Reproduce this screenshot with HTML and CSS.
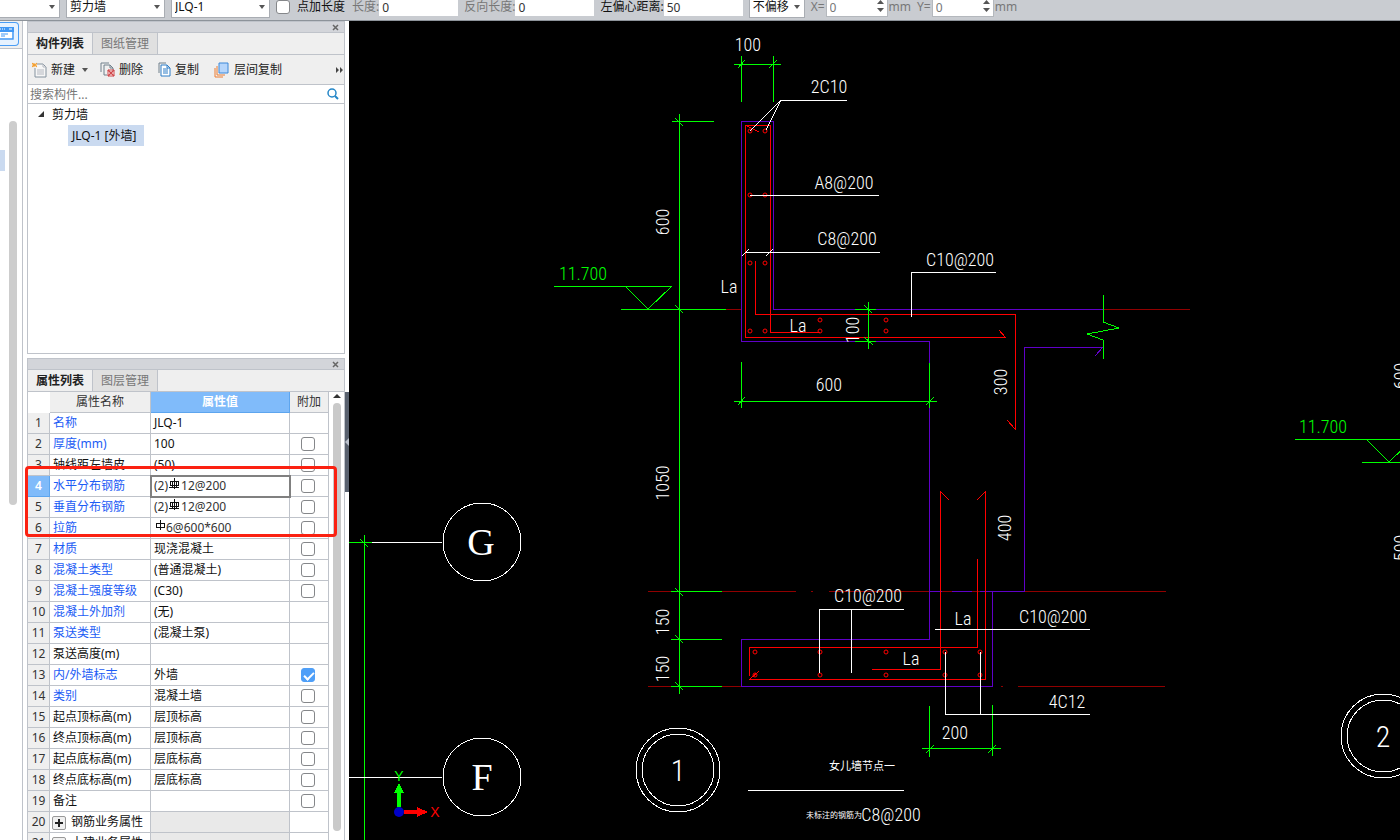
FILE: index.html
```html
<!DOCTYPE html>
<html lang="zh-CN">
<head>
<meta charset="utf-8">
<title>剪力墙</title>
<link rel="stylesheet" href="styles.css">
</head>
<body>
<header class="optbar">
  <span class="combo combo-first"><select aria-label="楼层"><option></option></select></span>
  <span class="combo combo-wide"><select aria-label="构件类型"><option>剪力墙</option></select></span>
  <span class="combo combo-wide"><select aria-label="构件"><option>JLQ-1</option></select></span>
  <label class="opt-check"><input type="checkbox" class="tick">点加长度</label>
  <label class="opt muted">长度:<input type="text" value="0"></label>
  <label class="opt muted">反向长度:<input type="text" value="0"></label>
  <label class="opt">左偏心距离:<input type="text" value="50"></label>
  <span class="combo combo-small"><select aria-label="偏移"><option>不偏移</option></select></span>
  <label class="opt muted spin">X=<span class="spinbox"><input type="text" value="0"><svg width="7" height="12" viewBox="0 0 7 12"><path d="M0 4l3.500-4 3.500 4zM0 8l3.500 4 3.500-4z"/></svg></span>mm</label>
  <label class="opt muted spin">Y=<span class="spinbox"><input type="text" value="0"><svg width="7" height="12" viewBox="0 0 7 12"><path d="M0 4l3.500-4 3.500 4zM0 8l3.500 4 3.500-4z"/></svg></span>mm</label>
</header>
<div class="workspace">
  <aside class="strip">
    <div class="strip-top"><button class="strip-btn" aria-label="视图"><svg width="15" height="16" viewBox="0 0 15 16"><path d="M0 1h14v13H0" fill="#fff"/><path d="M0 2h13v11H0" fill="none" stroke="#3f97f5" stroke-width="1.500"/><path d="M0 1h14v5H0z" fill="#3f97f5"/><path d="M0 3h1M2 3h1M4 3h1M9 3h3" stroke="#fff"/><path d="M1 8h7M1 10h4" stroke="#3f97f5"/></svg></button></div>
    <div class="strip-list"><span class="strip-sel"></span><span class="strip-thumb"></span></div>
  </aside>
  <div class="docks">
    <section class="dock dock-list">
      <div class="dock-title"><button class="close" aria-label="关闭"><svg width="7" height="7" viewBox="0 0 7 7"><path d="M1 1l5 5M6 1l-5 5" stroke="#666" stroke-width="1.500"/></svg></button></div>
      <nav class="tabs"><button class="tab active">构件列表</button><button class="tab">图纸管理</button></nav>
      <div class="tools">
        <button class="tool tool-new"><svg width="16" height="16" viewBox="0 0 16 16"><path d="M5 2h6l3 3v10H3V6" fill="#f6f6f6" stroke="#84929e"/><path d="M11 2v3h3M5 8h7M5 10h7M5 12h7" fill="none" stroke="#b4b8c0"/><path d="M0 1l5 4M5 1L0 5M2 1v4M0 3h5" stroke="#f59a23"/></svg>新建<i class="caret"></i></button>
        <button class="tool"><svg width="16" height="16" viewBox="0 0 16 16"><path d="M1 10V1h8M4 13V3h6l3 3v2M4 13h3M10 3v3h3" fill="none" stroke="#71808c"/><path d="M8 8h6v6H8z" fill="#fff" stroke="#d0494c"/><path d="M8 8l6 6M14 8l-6 6" stroke="#d0494c" stroke-width="1.500"/></svg>删除</button>
        <button class="tool"><svg width="14" height="16" viewBox="0 0 14 16"><path d="M1 11V1h7" fill="none" stroke="#71808c"/><path d="M3 3h6l3 3v8H3z" fill="#fff" stroke="#2d7cc7"/><path d="M9 3v3h3M5 7h5M5 9h5M5 11h5" fill="none" stroke="#2d7cc7"/></svg>复制</button>
        <button class="tool tool-floor"><svg width="15" height="16" viewBox="0 0 15 16"><path d="M1 6v9h8M3 4v9h8" fill="none" stroke="#ec7c32"/><path d="M5 1h9v10H5z" fill="#b5d5fb" stroke="#3d88d8"/></svg>层间复制</button>
        <button class="more" aria-label="更多"><svg width="8" height="6" viewBox="0 0 8 6"><path d="M0 0l3 3-3 3zM4 0l3 3-3 3z" fill="#444"/></svg></button>
      </div>
      <div class="search"><input type="text" placeholder="搜索构件..." aria-label="搜索构件"><svg width="12" height="12" viewBox="0 0 12 12"><circle cx="5" cy="5" r="4" fill="none" stroke="#2486c7" stroke-width="1.500"/><path d="M8 8l3 3" stroke="#2486c7" stroke-width="2"/></svg></div>
      <ul class="tree"><li><span class="node"><svg width="7" height="7" viewBox="0 0 7 7"><path d="M6 0v6H0z" fill="#333"/></svg>剪力墙</span><ul><li><span class="leaf">JLQ-1 [外墙]</span></li></ul></li></ul>
    </section>
    <section class="dock dock-props">
      <div class="dock-title"><button class="close" aria-label="关闭"><svg width="7" height="7" viewBox="0 0 7 7"><path d="M1 1l5 5M6 1l-5 5" stroke="#666" stroke-width="1.500"/></svg></button></div>
      <nav class="tabs"><button class="tab active">属性列表</button><button class="tab">图层管理</button></nav>
      <div class="grid-wrap">
        <table class="props">
          <colgroup><col class="c-num"><col class="c-name"><col class="c-val"><col class="c-add"></colgroup>
          <thead><tr><th class="corner"></th><th>属性名称</th><th class="sel">属性值</th><th>附加</th></tr></thead>
          <tbody>
            <tr><th>1</th><td class="link">名称</td><td>JLQ-1</td><td></td></tr>
            <tr><th>2</th><td class="link">厚度(mm)</td><td>100</td><td><input type="checkbox" class="tick" aria-label="厚度"></td></tr>
            <tr><th>3</th><td>轴线距左墙皮</td><td>(50)</td><td><input type="checkbox" class="tick" aria-label="轴线距左墙皮"></td></tr>
            <tr><th class="sel">4</th><td class="link">水平分布钢筋</td><td class="bar current">(2)<svg width="13" height="12" viewBox="0 0 13 12"><path d="M2 3h8v4H2zM4 3v6M8 3v6M1 9h10M6 0v11"/></svg>12@200</td><td><input type="checkbox" class="tick" aria-label="水平分布钢筋"></td></tr>
            <tr><th>5</th><td class="link">垂直分布钢筋</td><td class="bar">(2)<svg width="13" height="12" viewBox="0 0 13 12"><path d="M2 3h8v4H2zM4 3v6M8 3v6M1 9h10M6 0v11"/></svg>12@200</td><td><input type="checkbox" class="tick" aria-label="垂直分布钢筋"></td></tr>
            <tr><th>6</th><td class="link">拉筋</td><td class="bar"><svg width="12" height="12" viewBox="0 0 12 12"><path d="M2 3h8v4H2zM6 0v10"/></svg>6@600*600</td><td><input type="checkbox" class="tick" aria-label="拉筋"></td></tr>
            <tr><th>7</th><td class="link">材质</td><td>现浇混凝土</td><td><input type="checkbox" class="tick" aria-label="材质"></td></tr>
            <tr><th>8</th><td class="link">混凝土类型</td><td>(普通混凝土)</td><td><input type="checkbox" class="tick" aria-label="混凝土类型"></td></tr>
            <tr><th>9</th><td class="link">混凝土强度等级</td><td>(C30)</td><td><input type="checkbox" class="tick" aria-label="混凝土强度等级"></td></tr>
            <tr><th>10</th><td class="link">混凝土外加剂</td><td>(无)</td><td></td></tr>
            <tr><th>11</th><td class="link">泵送类型</td><td>(混凝土泵)</td><td></td></tr>
            <tr><th>12</th><td>泵送高度(m)</td><td></td><td></td></tr>
            <tr><th>13</th><td class="link">内/外墙标志</td><td>外墙</td><td><input type="checkbox" class="tick" aria-label="内/外墙标志" checked></td></tr>
            <tr><th>14</th><td class="link">类别</td><td>混凝土墙</td><td><input type="checkbox" class="tick" aria-label="类别"></td></tr>
            <tr><th>15</th><td>起点顶标高(m)</td><td>层顶标高</td><td><input type="checkbox" class="tick" aria-label="起点顶标高"></td></tr>
            <tr><th>16</th><td>终点顶标高(m)</td><td>层顶标高</td><td><input type="checkbox" class="tick" aria-label="终点顶标高"></td></tr>
            <tr><th>17</th><td>起点底标高(m)</td><td>层底标高</td><td><input type="checkbox" class="tick" aria-label="起点底标高"></td></tr>
            <tr><th>18</th><td>终点底标高(m)</td><td>层底标高</td><td><input type="checkbox" class="tick" aria-label="终点底标高"></td></tr>
            <tr><th>19</th><td>备注</td><td></td><td><input type="checkbox" class="tick" aria-label="备注"></td></tr>
            <tr><th>20</th><td class="group"><button class="plus" aria-label="展开"></button>钢筋业务属性</td><td class="blank"></td><td></td></tr>
            <tr><th>21</th><td class="group"><button class="plus" aria-label="展开"></button>土建业务属性</td><td class="blank"></td><td></td></tr>
          </tbody>
        </table>
        <div class="vscroll"><i class="up"></i><i class="thumb"></i></div>
      </div>
      <div class="callout"></div>
    </section>
  </div>
  <div class="splitter"><button class="handle" aria-label="收起"><i></i></button></div>
  <main class="canvas">
    <svg class="cad" width="100%" height="100%">
      <g transform="translate(-349 -21)">
        <g class="dark">
          <path d="M726 309H742M1103 309H1190M648 591H796M811 591h2M829 591H1166M648 686H742M1001 686h2M1018 686H1165"/>
        </g>
        <g class="purple">
          <path d="M929 341H741V121H773V309H1103M929 341V639H741V686H992V591M929 591H942M952 591H972M980 591H1024V347H1103L1095 356"/>
        </g>
        <g class="red">
          <path d="M745 125V337H1005L999 330M745 125H770V332H820M747 126L759 132M755 261V314H1015V429L1007 420"/>
          <path d="M949 500L940 491V669H872M977 500L985 492V679H750L759 671M977 559V647H749V676"/>
          <g class="rebar">
            <circle cx="750" cy="131" r="2"/><circle cx="765" cy="131" r="2"/><circle cx="750" cy="195" r="2"/><circle cx="765" cy="195" r="2"/>
            <circle cx="750" cy="263" r="2"/><circle cx="765" cy="263" r="2"/><circle cx="750" cy="331" r="2"/><circle cx="765" cy="331" r="2"/>
            <circle cx="820" cy="320" r="2"/><circle cx="820" cy="331" r="2"/><circle cx="886" cy="320" r="2"/><circle cx="886" cy="331" r="2"/>
            <circle cx="755" cy="652" r="2"/><circle cx="820" cy="652" r="2"/><circle cx="886" cy="652" r="2"/><circle cx="945" cy="652" r="2"/><circle cx="980" cy="652" r="2"/>
            <circle cx="755" cy="675" r="2"/><circle cx="820" cy="675" r="2"/><circle cx="886" cy="675" r="2"/><circle cx="945" cy="675" r="2"/><circle cx="980" cy="675" r="2"/>
          </g>
        </g>
        <g class="green">
          <path d="M734 64H781M741 56V102M773 56V102M738 68L745 60M769 68L777 60"/>
          <path d="M679 114V694M672 121H714M621 309H726M671 591H722M671 639H722M671 686H722"/>
          <path d="M675 118L683 126M675 305L683 313M675 588L683 596M675 635L683 643M675 682L683 690"/>
          <path d="M554 286H672M626 287L648 309L671 287"/>
          <path d="M868 302V349M855 309H876M855 341H876M864 305L872 313M864 337L873 345"/>
          <path d="M734 401H937M741 362V408M929 363V408M738 405L745 397M926 405L934 397"/>
          <path d="M1103 295V322L1119 328L1087 334L1103 340V359"/>
          <path d="M922 748H1001M929 706V757M992 705V756M926 753L934 745M988 753L996 745"/>
          <path d="M364 535V1400M349 542H372M360 539L368 547"/>
          <path d="M1295 439H1413M1367 440L1389 462L1412 440M1362 462H1460"/>
        </g>
        <g class="white">
          <path d="M847 100H781L750 131M781 100L766 130M750 195H879M745 252H880M742 256L749 249M766 256L773 249"/>
          <path d="M911 317V272H996M904 609H819V673M851 609V673M935 629H1090M945 652V714H1090M980 652V714M748 790H904"/>
          <path d="M372 542H442M349 777H442"/>
          <circle cx="482" cy="542" r="39"/><circle cx="482" cy="777" r="39"/>
          <circle cx="678" cy="770" r="42"/><circle cx="678" cy="770" r="36"/>
          <circle cx="1383" cy="736" r="42"/><circle cx="1383" cy="736" r="36"/>
        </g>
        <g class="dim">
          <text x="748" y="51">100</text>
          <text x="829" y="93">2C10</text>
          <text x="844" y="189">A8@200</text>
          <text x="847" y="245">C8@200</text>
          <text x="960" y="266">C10@200</text>
          <text x="729" y="293">La</text>
          <text x="798" y="332">La</text>
          <text x="829" y="391">600</text>
          <text x="868" y="602">C10@200</text>
          <text x="963" y="625">La</text>
          <text x="911" y="665">La</text>
          <text x="1053" y="623">C10@200</text>
          <text x="1067" y="708">4C12</text>
          <text x="955" y="739">200</text>
          <text x="891" y="821">C8@200</text>
          <text class="lime" x="583" y="280">11.700</text>
          <text class="lime" x="1323" y="433">11.700</text>
          <text transform="translate(662 222) rotate(-90)" y="7">600</text>
          <text transform="translate(852 330) rotate(-90)" y="7">100</text>
          <text transform="translate(1000 382) rotate(-90)" y="7">300</text>
          <text transform="translate(662 483) rotate(-90)" y="7">1050</text>
          <text transform="translate(1004 528) rotate(-90)" y="7">400</text>
          <text transform="translate(662 622) rotate(-90)" y="7">150</text>
          <text transform="translate(662 669) rotate(-90)" y="7">150</text>
          <text transform="translate(1400 376) rotate(-90)" y="7">600</text>
          <text transform="translate(1400 548) rotate(-90)" y="7">500</text>
          <text class="mark" x="678" y="781">1</text>
          <text class="mark" x="1383" y="747">2</text>
          <text class="axis" x="481" y="555">G</text>
          <text class="axis" x="482" y="790">F</text>
          <text class="caption" x="862" y="770">女儿墙节点一</text>
          <text class="note" x="862" y="818">未标注的钢筋为</text>
        </g>
        <g>
          <path d="M397 807V793H394L399 783L404 793H401V807z" fill="#00ff00"/>
          <path d="M404 810H417V807L428 812L417 817V814H404z" fill="#ff0000"/>
          <circle cx="399" cy="812" r="5" fill="#0000c8"/>
          <text class="ucs lime" x="399" y="781">Y</text>
          <text class="ucs crimson" x="435" y="817">X</text>
        </g>
      </g>
    </svg>
  </main>
</div>
</body>
</html>
```

FILE: styles.css
```css
* { box-sizing: border-box; }
body {
  margin: 0;
  height: 100vh;
  display: flex;
  flex-direction: column;
  overflow: hidden;
  background: #fff;
  color: #111;
  font: 12px/16px "Noto Sans", "Noto Sans CJK SC", sans-serif;
}
button, input, select { font: inherit; color: inherit; margin: 0; padding: 0; border: 0; background: none; }
svg { flex: none; }
ul { list-style: none; margin: 0; padding: 0; }

.optbar {
  flex: none;
  height: 21px;
  display: flex;
  align-items: flex-start;
  gap: 6px;
  background: #c9ccd1;
  border-bottom: 1px solid #8d939a;
  line-height: 14px;
  white-space: nowrap;
}
.combo { position: relative; flex: none; height: 18px; background: #fff; border: 1px solid #a9adb3; border-top: 0; }
.combo select { appearance: none; width: 100%; height: 14px; line-height: 14px; padding-left: 3px; display: block; }
.combo::after {
  content: "";
  position: absolute;
  right: 4px;
  bottom: 8px;
  border: 3px solid transparent;
  border-top: 4px solid #555;
  border-bottom: 0;
}
.combo-first { width: 60px; border-left: 0; }
.combo-wide { width: 99px; }
.combo-small { width: 56px; }
.opt-check { display: flex; flex: none; width: 70px; gap: 7px; height: 14px; align-items: center; }
.opt-check .tick { flex: none; }
.opt { display: flex; flex: none; height: 14px; align-items: flex-start; }
.opt input { width: 79px; height: 16px; padding: 0 0 2px 3px; line-height: 14px; background: #fff; color: #333; }
.muted { color: #777; }
.spin { gap: 1px; }
.spinbox { display: flex; align-items: flex-start; width: 62px; height: 17px; padding-right: 3px; background: #fff; border: 1px solid #b4b8bd; border-top: 0; }
.opt.spin input { flex: 1; width: 0; min-width: 0; color: #777; }
.spinbox path { fill: #555; }

.tick {
  appearance: none;
  display: block;
  width: 14px;
  height: 14px;
  background: #fff;
  border: 1px solid #85878a;
  border-radius: 3px;
}
.tick:checked { position: relative; background: #4f9ff8; border-color: #4f9ff8; }
.tick:checked::after {
  content: "";
  position: absolute;
  left: 4px;
  top: 1px;
  width: 4px;
  height: 8px;
  border: solid #fff;
  border-width: 0 2px 2px 0;
  transform: rotate(45deg);
}

.workspace { flex: 1; min-height: 0; display: flex; }
.strip { flex: none; width: 23px; display: flex; flex-direction: column; border-right: 1px solid #bfc3ca; }
.strip-top { height: 28px; padding-top: 1px; background: #f0f0f0; border-bottom: 1px solid #bfc3ca; }
.strip-btn { display: flex; align-items: center; width: 19px; height: 24px; border: 1px solid #4a9df5; border-left: 0; border-radius: 0 4px 4px 0; background: #e6f2ff; }
.strip-list { flex: 1; display: flex; align-items: flex-start; gap: 4px; padding-top: 72px; }
.strip-sel { width: 5px; height: 21px; margin-top: 29px; background: #cadaf0; }
.strip-thumb { width: 8px; height: 384px; border-radius: 4px; background: #cdcdcd; }

.docks { flex: none; width: 322px; padding-left: 4px; display: flex; flex-direction: column; gap: 4px; }
.dock { position: relative; display: flex; flex-direction: column; border: 1px solid #bfc3ca; background: #fff; }
.dock-list { height: 333px; flex: none; }
.dock-props { flex: 1; min-height: 0; border-bottom: 0; }
.dock-title { flex: none; height: 11px; display: flex; justify-content: flex-end; padding-right: 5px; background: #d3d5da; border-bottom: 1px solid #bfc3ca; }
.close { display: flex; align-items: center; }
.tabs { flex: none; display: flex; height: 22px; background: #efefef; border-bottom: 1px solid #bfc3ca; }
.tab { width: 65px; background: #e0e0e0; border-right: 1px solid #bfc3ca; color: #777; white-space: nowrap; }
.tab.active { background: #efefef; color: #222; font-weight: 600; }
.tools { flex: none; display: flex; align-items: center; height: 29px; padding-left: 4px; background: #efefef; gap: 15px; color: #222; }
.tool { display: flex; align-items: center; gap: 3px; white-space: nowrap; }
.tool-new { width: 53px; }
.tool-floor { gap: 5px; }
.caret { border: 3px solid transparent; border-top: 4px solid #555; border-bottom: 0; margin-left: 4px; }
.more { margin-left: auto; display: flex; }
.search { flex: none; display: flex; align-items: center; height: 20px; padding: 0 5px 0 2px; border: solid #bfc3ca; border-width: 1px 0; }
.search input { flex: 1; min-width: 0; height: 18px; outline: 0; }
.search input::placeholder { color: #777; }
.tree { line-height: 21px; color: #111; }
.node { display: flex; align-items: center; gap: 7px; padding-left: 10px; }
.leaf { display: inline-block; margin-left: 40px; padding: 0 8px 0 4px; background: #cadaf0; }

.grid-wrap { flex: 1; min-height: 0; display: flex; overflow: hidden; }
.props { flex: none; align-self: flex-start; width: 301px; table-layout: fixed; border-collapse: separate; border-spacing: 0; }
.c-num { width: 22px; }
.c-name { width: 101px; }
.c-val { width: 139px; }
.c-add { width: 39px; }
.props th, .props td { height: 21px; padding: 0; line-height: 16px; border: solid #bfc3ca; border-width: 0 1px 1px 0; white-space: nowrap; overflow: hidden; }
.props th { background: #efefef; font-weight: 400; color: #333; text-align: center; }
.props .corner { background: #fff; border-color: #fff; }
.props th.sel { background: #80bbfa; color: #fff; font-weight: 600; border-color: #5da5ee; }
.props td { padding-left: 3px; }
.props td.link { color: #1c5cf5; }
.props td:last-child { padding-left: 11px; }
.props .blank { background: #e9e9e9; }
.props .bar { color: #333; }
.bar svg { display: inline-block; vertical-align: 0; }
.bar path { fill: none; stroke: #111; shape-rendering: crispEdges; }
.props .current { outline: 2px solid #808080; outline-offset: -1px; }
.plus {
  width: 14px;
  height: 14px;
  margin: 0 5px 0 -1px;
  vertical-align: -3px;
  border: 1px solid #999;
  border-radius: 2px;
  background: linear-gradient(#222, #222) center / 8px 2px no-repeat, linear-gradient(#222, #222) center / 2px 8px no-repeat, #f0f0f0;
}
.vscroll { flex: 1; display: flex; flex-direction: column; align-items: center; gap: 5px; padding: 2px 0 9px; }
.up { border: 4px solid transparent; border-bottom: 4px solid #333; border-top: 0; }
.thumb { flex: 1; width: 8px; border-radius: 4px; background: #c9c9c9; }
.callout { position: absolute; left: -3px; top: 107px; width: 312px; height: 71px; border: 3px solid #fb2111; border-radius: 4px; pointer-events: none; }

.splitter { flex: none; width: 4px; padding-top: 371px; }
.handle { display: flex; align-items: center; width: 4px; height: 100px; background: #59616e; }
.handle i { border: 4px solid transparent; border-right: 4px solid #bbc1cc; border-left: 0; }

.canvas { flex: 1; min-width: 0; background: #000; overflow: hidden; }
.cad { display: block; }
.cad path, .white circle { shape-rendering: crispEdges; }
.dark, .purple, .red, .green, .white { fill: none; stroke-width: 1px; }
.dark { stroke: #900000; }
.purple { stroke: #6000c8; }
.red { stroke: #ff0000; }
.green { stroke: #00ff00; }
.white { stroke: #fff; }
.dim { fill: #fff; text-anchor: middle; font-family: "Roboto Condensed", Roboto, sans-serif; font-size: 18px; font-weight: 300; }
.dim .mark { font-size: 30px; }
.dim .axis { font-family: "Liberation Serif", serif; font-size: 38px; }
.dim .caption { font-family: "Noto Sans CJK SC", sans-serif; font-size: 11px; font-weight: 400; }
.dim .note { font-family: "Noto Sans CJK SC", sans-serif; font-size: 8px; font-weight: 400; text-anchor: end; }
.dim .lime, .lime { fill: #00ff00; }
.crimson { fill: #ff0000; }
.ucs { font-family: "Liberation Sans", sans-serif; font-size: 14px; text-anchor: middle; }
```
